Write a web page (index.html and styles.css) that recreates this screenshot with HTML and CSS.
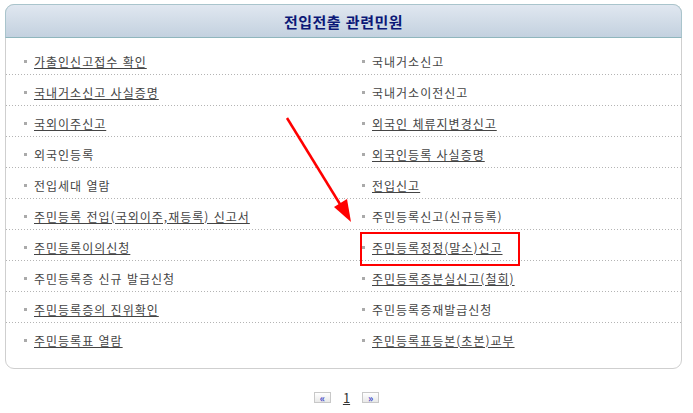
FILE: index.html
```html
<!DOCTYPE html>
<html lang="ko">
<head>
    <meta charset="UTF-8">
    <title>전입전출 관련민원</title>
    <link rel="stylesheet" href="styles.css">
</head>
<body>

<div class="page">
    <div class="box">
        <h2 class="box-title">전입전출 관련민원</h2>

        <ul class="civil-list">
            <li><a href="#">가출인신고접수 확인</a></li>
            <li><span>국내거소신고</span></li>
            <li><a href="#">국내거소신고 사실증명</a></li>
            <li><span>국내거소이전신고</span></li>
            <li><a href="#">국외이주신고</a></li>
            <li><a href="#">외국인 체류지변경신고</a></li>
            <li><span>외국인등록</span></li>
            <li><a href="#">외국인등록 사실증명</a></li>
            <li><span>전입세대 열람</span></li>
            <li><a href="#">전입신고</a></li>
            <li><a href="#">주민등록 전입(국외이주,재등록) 신고서</a></li>
            <li><span>주민등록신고(신규등록)</span></li>
            <li><a href="#">주민등록이의신청</a></li>
            <li class="marked"><a href="#">주민등록정정(말소)신고</a></li>
            <li><span>주민등록증 신규 발급신청</span></li>
            <li><a href="#">주민등록증분실신고(철회)</a></li>
            <li><a href="#">주민등록증의 진위확인</a></li>
            <li><span>주민등록증재발급신청</span></li>
            <li><a href="#">주민등록표 열람</a></li>
            <li><a href="#">주민등록표등본(초본)교부</a></li>
        </ul>
    </div>

    <div class="paging">
        <a href="#" class="pg-btn">&laquo;</a>
        <a href="#" class="pg-num">1</a>
        <a href="#" class="pg-btn">&raquo;</a>
    </div>

    <!-- annotation arrow -->
    <svg class="arrow" width="693" height="413" viewBox="0 0 693 413">
        <line x1="287" y1="118" x2="343" y2="209" stroke="#ff0000" stroke-width="2.5"/>
        <polygon points="351,222 334,207 347,199" fill="#ff0000"/>
    </svg>
</div>

</body>
</html>
```

FILE: styles.css
```css
* {
    margin: 0;
    padding: 0;
    box-sizing: border-box;
}

body {
    font-family: "Noto Sans CJK KR", "Noto Sans", sans-serif;
    font-size: 12px;
    color: #444;
    background: #fff;
}

.page {
    position: relative;
    width: 693px;
    height: 413px;
    padding: 4px 0 0 5px;
}

.box {
    width: 677px;
    border: 1px solid #cfcfcf;
    border-radius: 9px;
    background: #fff;
}

.box-title {
    height: 34px;
    line-height: 33px;
    margin: -1px -1px 0;
    text-align: center;
    font-size: 15px;
    letter-spacing: 0.5px;
    font-weight: bold;
    color: #0b1877;
    background: linear-gradient(to bottom, #e0e7f0, #c3d1df);
    border: 1px solid #a9c4cc;
    border-bottom: 1px solid #8fb6bd;
    border-radius: 9px 9px 0 0;
}

.civil-list {
    list-style: none;
    display: grid;
    grid-template-columns: 338px 338px;
    padding: 6px 0 14px;
}

.civil-list li {
    position: relative;
    height: 31px;
    padding: 10px 0 0 28px;
    line-height: 15px;
    letter-spacing: 1px;
    background: linear-gradient(to right, #b4b4b4 1px, transparent 1px) repeat-x left bottom / 3px 1px;
}

.civil-list li:nth-last-child(-n+2) {
    background: none;
}

.civil-list li::before {
    content: "";
    position: absolute;
    left: 18px;
    top: 16px;
    width: 3px;
    height: 3px;
    background: #aaa;
}

.civil-list a {
    color: #444;
    text-decoration: underline;
}

.civil-list li.marked::after {
    content: "";
    position: absolute;
    left: 16px;
    top: 2px;
    width: 156px;
    height: 30px;
    border: 2px solid #f00;
}

.paging {
    display: flex;
    justify-content: center;
    align-items: center;
    gap: 10px;
    margin-top: 19px;
    padding-right: 5px;
}

.pg-btn {
    display: block;
    width: 17px;
    height: 11px;
    line-height: 9px;
    font-size: 10px;
    font-weight: bold;
    text-align: center;
    text-decoration: none;
    color: #3b44c4;
    border: 1px solid #c8c8c8;
    background: linear-gradient(to bottom, #fff, #e9e9e9);
}

.pg-num {
    color: #333;
    font-size: 13px;
    text-decoration: underline;
    padding: 0 2px;
}

.arrow {
    position: absolute;
    left: 0;
    top: 0;
    pointer-events: none;
}
```
